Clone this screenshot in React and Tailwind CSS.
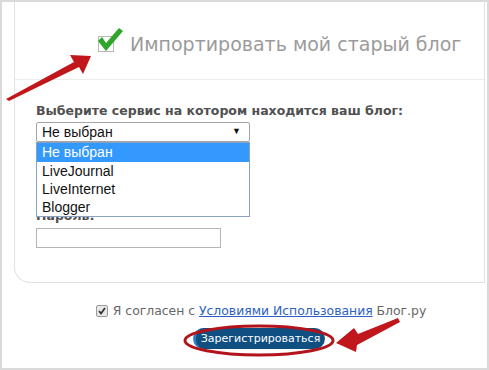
import React from "react";

export default function App() {
  return (
    <div className="relative w-[489px] h-[370px] bg-white border-2 border-[#dadada] overflow-hidden" style={{ fontFamily: '"DejaVu Sans", Verdana, sans-serif' }}>
      {/* panel */}
      <div className="ml-[12px] mr-[2px] h-[281px] border-l border-r border-b border-[#e2e2e2] rounded-bl-[16px] flex flex-col">
        <div className="h-[78px] border-b border-[#ececec] flex items-center pl-[83px] pt-[7px]">
          <div className="relative w-[16px] h-[16px] border border-[#b9b9b9] bg-white">
            <svg className="absolute -left-[2px] -top-[10px]" width="28" height="28" viewBox="0 0 28 28">
              <polygon points="1,14 5,10 9,16 22,1 26,4 9,24" fill="#2fa52a" />
            </svg>
          </div>
          <span className="ml-[16px] text-[19px] text-[#9b9b9b]">Импортировать мой старый блог</span>
        </div>
        <div className="relative pl-[21px] pt-[23px]">
          <div className="text-[12.5px] font-bold text-[#505050] leading-[16px]">Выберите сервис на котором находится ваш блог:</div>
          <div className="mt-[3px] w-[214px] h-[20px] border border-[#a5a5a5] rounded-[2px] flex items-center justify-between pl-[5px] pr-[8px] text-[14px] text-[#111]" style={{ fontFamily: '"Liberation Sans", Arial, sans-serif' }}>
            <span>Не выбран</span>
            <span className="text-[9px]">▼</span>
          </div>
          <div className="mt-[66px] text-[12.5px] font-bold text-[#505050] leading-[16px]">Пароль:</div>
          <div className="mt-[4px] w-[185px] h-[20px] border border-[#b5b5b5] bg-white"></div>

          {/* dropdown list overlay */}
          <div className="absolute left-[21px] top-[62px] w-[214px] h-[75px] border border-[#8aa2c2] bg-white text-[14px] text-[#111] leading-[18px]" style={{ fontFamily: '"Liberation Sans", Arial, sans-serif' }}>
            <div className="bg-[#3399ff] text-white h-[19px] pl-[5px] leading-[19px]">Не выбран</div>
            <div className="pl-[5px]">LiveJournal</div>
            <div className="pl-[5px]">LiveInternet</div>
            <div className="pl-[5px]">Blogger</div>
          </div>
        </div>
      </div>

      {/* footer */}
      <div className="mt-[21px] h-[14px] flex items-center justify-center pl-[33px] text-[12.4px] leading-[14px] text-[#666]">
        <span className="w-[12px] h-[12px] rounded-[2px] border border-[#9a9a9a] bg-[#e8e8e8] flex items-center justify-center">
          <svg width="10" height="10" viewBox="0 0 10 10"><path d="M2 5 L4 7.5 L8 2" stroke="#333" strokeWidth="1.8" fill="none" /></svg>
        </span>
        <span className="ml-[5px]">Я согласен с <span className="text-[#2d5fc4] underline">Условиями Использования</span> Блог.ру</span>
      </div>
      <div className="mt-[10px] flex justify-center pl-[29px]">
        <button className="w-[132px] h-[21px] rounded-full bg-[#0f4f82] text-white text-[11px] leading-[18px] border-l-[3px] border-[#2d7dc0]">Зарегистрироваться</button>
      </div>

      {/* annotations */}
      <svg className="absolute left-0 top-0 pointer-events-none" width="489" height="370" viewBox="0 0 489 370">
        <polygon points="4,97 72,60 68,53 89,54 81,72 77,65 7,99" fill="#c0161c" />
        <ellipse cx="257" cy="338.5" rx="74" ry="14.5" fill="none" stroke="#b3141b" strokeWidth="3" />
        <polygon points="396,316 356,332 352,326 334,341 354,350 355,343 398,320" fill="#c0161c" />
      </svg>
    </div>
  );
}
